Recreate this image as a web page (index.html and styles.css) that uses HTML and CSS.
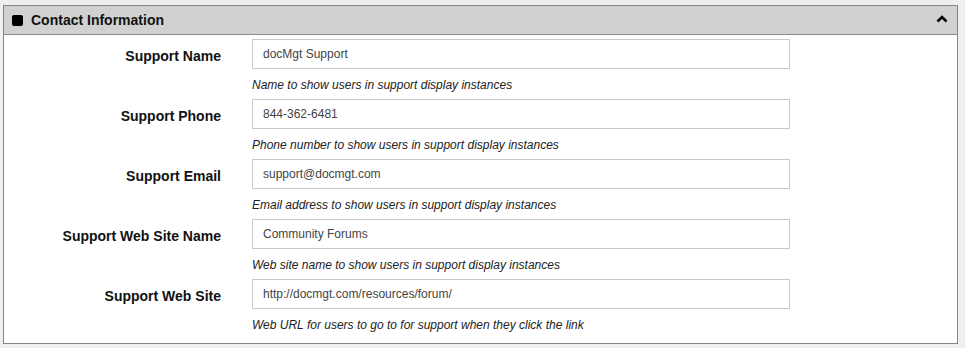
FILE: index.html
```html
<!DOCTYPE html>
<html>
  <head>
    <title>Contact Information</title>
    <link rel="stylesheet" href="styles.css">
  </head>
  <body>
    <div class="panel">
      <div class="panel-header">
        <span class="header-icon"></span>
        <span class="header-title">Contact Information</span>
        <svg class="collapse" width="12" height="8" viewBox="0 0 12 8">
          <path d="M1.5 6.5 L6 2 L10.5 6.5" fill="none" stroke="#000" stroke-width="2.6"/>
        </svg>
      </div>

      <div class="panel-body">
        <div class="field-row">
          <label class="field-label">Support Name</label>
          <div class="field">
            <input class="field-input" type="text" value="docMgt Support">
            <div class="field-help">Name to show users in support display instances</div>
          </div>
        </div>
        <div class="field-row">
          <label class="field-label">Support Phone</label>
          <div class="field">
            <input class="field-input" type="text" value="844-362-6481">
            <div class="field-help">Phone number to show users in support display instances</div>
          </div>
        </div>
        <div class="field-row">
          <label class="field-label">Support Email</label>
          <div class="field">
            <input class="field-input" type="text" value="support@docmgt.com">
            <div class="field-help">Email address to show users in support display instances</div>
          </div>
        </div>
        <div class="field-row">
          <label class="field-label">Support Web Site Name</label>
          <div class="field">
            <input class="field-input" type="text" value="Community Forums">
            <div class="field-help">Web site name to show users in support display instances</div>
          </div>
        </div>
        <div class="field-row">
          <label class="field-label">Support Web Site</label>
          <div class="field">
            <input class="field-input" type="text" value="http://docmgt.com/resources/forum/">
            <div class="field-help">Web URL for users to go to for support when they click the link</div>
          </div>
        </div>
      </div>
    </div>
  </body>
</html>
```

FILE: styles.css
```css
body {
  font-family: "Liberation Sans", Arial, sans-serif;
  margin: 0;
  padding: 5px 7px 0 3px;
  background-color: #efefef;
}
.panel {
  background-color: #fff;
  border: 1px solid #858585;
}
.panel-header {
  display: flex;
  align-items: center;
  height: 28px;
  padding: 0 8px;
  background-color: #d1d1d1;
  border-bottom: 1px solid #8a8a8a;
}
.header-icon {
  display: inline-block;
  width: 11px;
  height: 11px;
  background-color: #000;
  border-radius: 2px;
  margin-right: 8px;
}
.header-title {
  font-size: 14px;
  font-weight: bold;
  color: #111;
  flex: 1;
}
.collapse {
  margin-top: -2px;
  margin-right: 1px;
}
.panel-body {
  padding: 4px 0;
}
.field-row {
  display: flex;
  height: 60px;
}
.field-label {
  width: 217px;
  padding-right: 31px;
  text-align: right;
  font-size: 14px;
  font-weight: bold;
  color: #111;
  line-height: 32px;
  padding-top: 1px;
}
.field {
  display: flex;
  flex-direction: column;
}
.field-input {
  box-sizing: border-box;
  width: 538px;
  height: 30px;
  margin: 0;
  padding: 0 10px;
  border: 1px solid #c9c9c9;
  font-family: "Liberation Sans", Arial, sans-serif;
  font-size: 12px;
  color: #444;
  background-color: #fff;
}
.field-help {
  padding-top: 9px;
  font-size: 12px;
  font-style: italic;
  color: #222;
  line-height: 14px;
}
```
